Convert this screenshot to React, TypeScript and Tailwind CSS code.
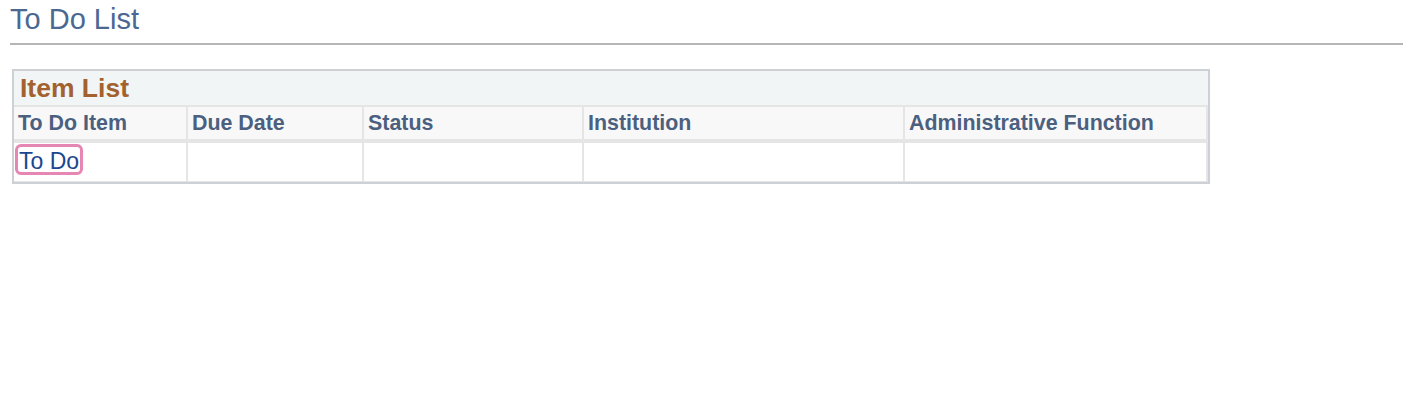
import React from "react";

const cols = [
  { label: "To Do Item", w: "w-[172px]" },
  { label: "Due Date", w: "w-[174px]" },
  { label: "Status", w: "w-[218px]" },
  { label: "Institution", w: "w-[319px]" },
  { label: "Administrative Function", w: "w-[301px]" },
];

export default function App() {
  return (
    <div className="bg-white min-h-[400px] font-['Liberation_Sans',Arial,sans-serif]">
      <div className="ml-[10px] pt-[3px] pb-[8px] border-b-2 border-[#b5b5b5]">
        <h1 className="text-[29px] leading-[32px] text-[#4b6892] font-normal">To Do List</h1>
      </div>
      <div className="ml-[12px] mt-[24px] w-[1198px] border-2 border-[#cdd0d4] bg-[#e5e5e5]">
        <div className="h-[34px] bg-[#f1f5f6] pl-[6px] text-[26.5px] leading-[34px] font-bold text-[#a3612d]">
          Item List
        </div>
        <div className="flex gap-[2px] mt-[2px] pr-[2px]">
          {cols.map((c) => (
            <div
              key={c.label}
              className={`${c.w} h-[32px] bg-[#f8f8f8] pl-[4px] text-[21.4px] leading-[32px] font-bold text-[#4b607f] whitespace-nowrap`}
            >
              {c.label}
            </div>
          ))}
        </div>
        <div className="flex gap-[2px] mt-[4px] mb-[1px] pr-[2px]">
          {cols.map((c, i) => (
            <div key={c.label} className={`${c.w} h-[38px] bg-white`}>
              {i === 0 && (
                <div className="pt-[1px] pl-[1px]">
                  <span className="inline-block border-[3px] border-[#e586b3] rounded-[6px] pl-[1px] pr-[1px] pt-[3px] h-[31px] text-[23px] leading-[23px] text-[#1a4690] cursor-pointer">
                    To Do
                  </span>
                </div>
              )}
            </div>
          ))}
        </div>
      </div>
    </div>
  );
}
